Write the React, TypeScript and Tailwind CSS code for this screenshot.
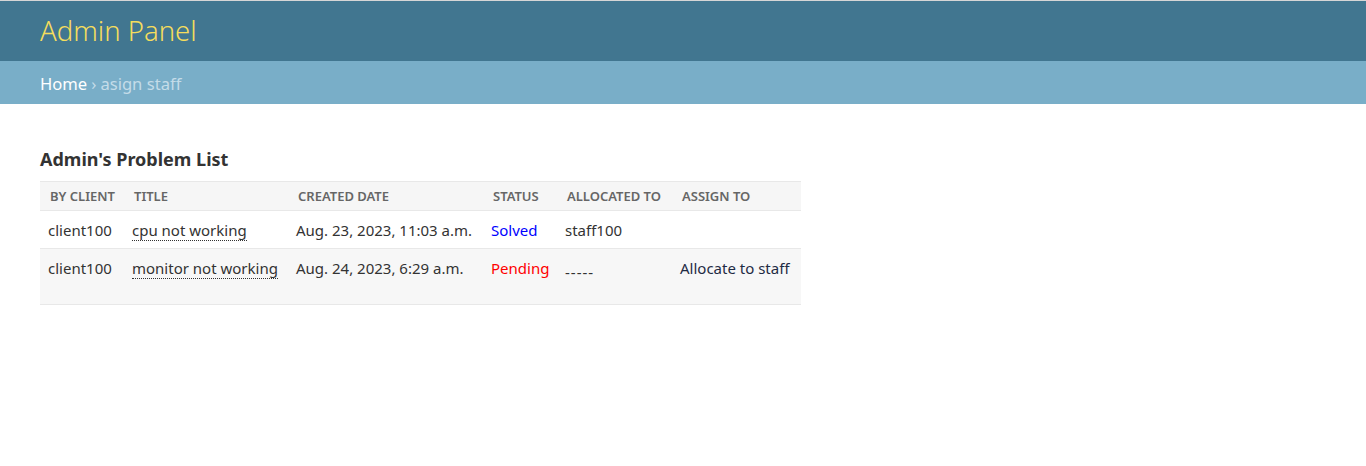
import React from "react";

type Row = {
  client: string;
  title: string;
  created: string;
  status: "Solved" | "Pending";
  allocated: string;
  assign: string;
};

const rows: Row[] = [
  {
    client: "client100",
    title: "cpu not working",
    created: "Aug. 23, 2023, 11:03 a.m.",
    status: "Solved",
    allocated: "staff100",
    assign: "",
  },
  {
    client: "client100",
    title: "monitor not working",
    created: "Aug. 24, 2023, 6:29 a.m.",
    status: "Pending",
    allocated: "-----",
    assign: "Allocate to staff",
  },
];

const headers = [
  { label: "By client", w: "w-[84px]" },
  { label: "Title", w: "w-[164px]" },
  { label: "Created date", w: "w-[195px]" },
  { label: "Status", w: "w-[74px]" },
  { label: "Allocated to", w: "w-[115px]" },
  { label: "Assign to", w: "w-[129px]" },
];

export default function App() {
  return (
    <div className="min-h-[466px] bg-white font-['Noto_Sans',sans-serif] text-[#333]">
      <header className="h-[61px] border-t border-[#d6d6d6] bg-[#417690] px-10 flex items-center">
        <h1 className="text-[27.5px] font-light text-[#f5dd5d] leading-none">
          Admin Panel
        </h1>
      </header>

      <nav className="h-[43px] bg-[#79aec8] px-10 pt-[3px] flex items-center text-[16.6px] text-[#c4dce8]">
        <a className="text-white">Home</a>
        <span className="mx-1">›</span>
        <span>asign staff</span>
      </nav>

      <main className="px-10 pt-[44px]">
        <h2 className="text-[18px] font-bold text-[#333] mb-[10px] leading-tight">
          Admin's Problem List
        </h2>

        <table className="w-[761px] border-collapse text-[15px] table-fixed">
          <thead>
            <tr className="bg-[#f6f6f6] border-y border-[#e8e8e8]">
              {headers.map((h) => (
                <th
                  key={h.label}
                  className={`${h.w} h-[29px] pl-[10px] pt-[2px] text-left text-[13px] font-semibold uppercase text-[#666] whitespace-nowrap`}
                >
                  {h.label}
                </th>
              ))}
            </tr>
          </thead>
          <tbody>
            {rows.map((r, i) => (
              <tr
                key={r.title}
                className={
                  i % 2 === 1
                    ? "bg-[#f7f7f7] border-b border-[#e8e8e8] align-top"
                    : "bg-white border-b border-[#e8e8e8] align-top"
                }
              >
                <td className={i === 1 ? "h-[56px] pl-2 pt-[8px] whitespace-nowrap" : "h-[38px] pl-2 pt-[8px] whitespace-nowrap"}>
                  {r.client}
                </td>
                <td className="pl-2 pt-[8px] whitespace-nowrap">
                  <a className="border-b border-dotted border-[#333] text-[#333]">{r.title}</a>
                </td>
                <td className="pl-2 pt-[8px] whitespace-nowrap">{r.created}</td>
                <td
                  className={
                    r.status === "Solved"
                      ? "pl-2 pt-[8px] text-[#0000ff]"
                      : "pl-2 pt-[8px] text-[#ff0000]"
                  }
                >
                  {r.status}
                </td>
                <td className="pl-2 pt-[8px] whitespace-nowrap">
                  {r.allocated === "-----" ? (
                    <span className="inline-block translate-y-[4px] tracking-[1px]">{r.allocated}</span>
                  ) : (
                    r.allocated
                  )}
                </td>
                <td className="pl-2 pt-[8px] whitespace-nowrap text-[#1f2b44]">{r.assign}</td>
              </tr>
            ))}
          </tbody>
        </table>
      </main>
    </div>
  );
}
